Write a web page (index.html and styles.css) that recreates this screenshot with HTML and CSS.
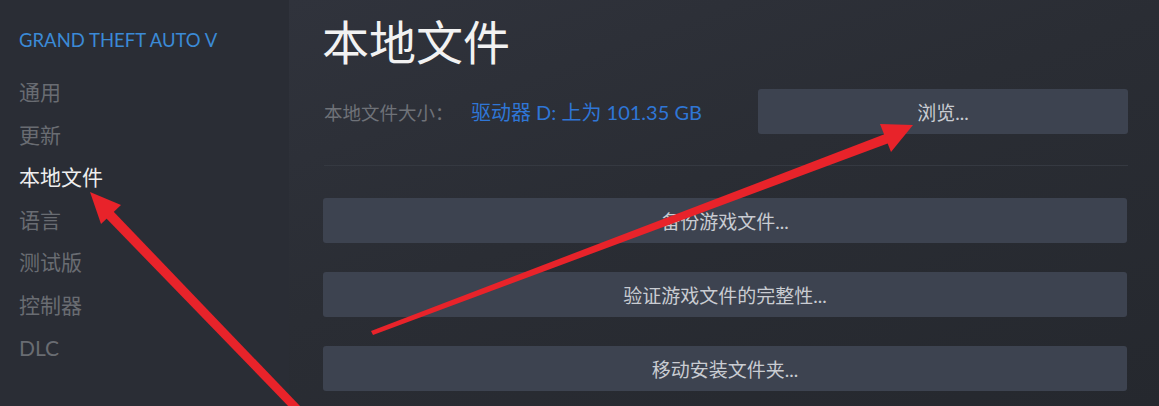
FILE: index.html
```html
<!DOCTYPE html>
<html>
<head lang="zh-CN">
    <meta charset="UTF-8">
    <title>本地文件</title>
    <link rel="stylesheet" href="styles.css">
</head>
<body>
    <div class="page">
        <div class="side">
            <div class="game">GRAND THEFT AUTO V</div>
            <ul class="nav">
                <li>通用</li>
                <li>更新</li>
                <li class="on">本地文件</li>
                <li>语言</li>
                <li>测试版</li>
                <li>控制器</li>
                <li class="latin">DLC</li>
            </ul>
        </div>
        <div class="main">
            <h1 class="title">本地文件</h1>
            <div class="info">
                <span class="label">本地文件大小：</span>
                <span class="size">驱动器 D: 上为 101.35 GB</span>
                <button class="btn btn_browse">浏览...</button>
            </div>
            <div class="line"></div>
            <button class="btn btn_wide">备份游戏文件...</button>
            <button class="btn btn_wide">验证游戏文件的完整性...</button>
            <button class="btn btn_wide">移动安装文件夹...</button>
        </div>
    </div>
    <svg class="marks" width="1159" height="406" viewBox="0 0 1159 406">
        <!-- 左边箭头 -->
        <polygon points="292,410 300,406 112,210 104,216" fill="#e8232a"/>
        <polygon points="90,192 121,205 101,224" fill="#e8232a"/>
        <!-- 右边箭头 -->
        <polygon points="371,331 373,335 889,143 885,134" fill="#e8232a"/>
        <polygon points="913,125 880,124 891,152" fill="#e8232a"/>
    </svg>
</body>
</html>
```

FILE: styles.css
```css
html, body {
    margin: 0;
    padding: 0;
    background: #2a2d34;
}

body {
    font-family: Lato, "Noto Sans CJK SC", sans-serif;
    width: 1159px;
    height: 406px;
    overflow: hidden;
    position: relative;
}

.page {
    display: flex;
    height: 406px;
}

.side {
    width: 289px;
    flex: none;
    background: #2a2d35;
    padding: 29px 0 0 19px;
    box-sizing: border-box;
}

.game {
    color: #3b8ad6;
    font-size: 18.5px;
    line-height: 22px;
}

.nav {
    list-style: none;
    margin: 20px 0 0 0;
    padding: 0;
}

.nav li {
    height: 42.6px;
    line-height: 42.6px;
    font-size: 21px;
    color: #696c72;
}

.nav li.on {
    color: #eeeeee;
}

.nav li.latin {
    font-size: 21px;
}

.main {
    flex: 1;
    padding: 0 31px 0 35px;
    background: linear-gradient(160deg, #30333c 0%, #2a2d34 45%, #25282e 100%);
}

.title {
    margin: 14px 0 0 -2px;
    font-size: 47px;
    font-weight: normal;
    line-height: 56px;
    color: #f2f2f2;
}

.info {
    display: flex;
    align-items: center;
    margin-top: 19px;
    height: 45px;
}

.label {
    color: #6f7278;
    font-size: 18.5px;
    width: 147px;
}

.size {
    color: #2f76d6;
    font-size: 20px;
}

.btn {
    display: block;
    border: none;
    outline: none;
    height: 45px;
    border-radius: 3px;
    background: #3d4350;
    color: #c9ccd2;
    font-family: Lato, "Noto Sans CJK SC", sans-serif;
    font-size: 19px;
    padding: 0;
}

.btn_browse {
    margin-left: auto;
    width: 370px;
}

.line {
    height: 1px;
    background: #353941;
    margin: 31px 0 32px 0;
}

.btn_wide {
    width: 100%;
    margin: 0 0 29px -1px;
}

.marks {
    position: absolute;
    left: 0;
    top: 0;
    pointer-events: none;
}
```
